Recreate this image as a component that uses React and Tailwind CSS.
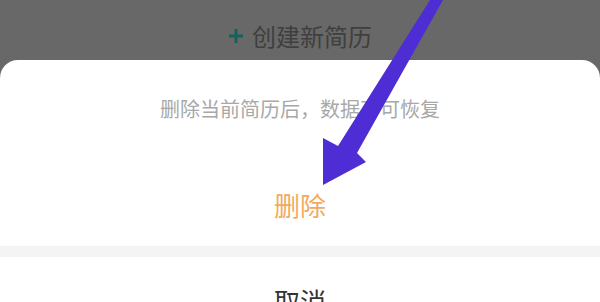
import React from 'react';

const cjk = { fontFamily: '"Noto Sans CJK SC", "Noto Sans", sans-serif' };

function Arrow() {
  // annotation arrow drawn over the screenshot
  return (
    <svg
      className="absolute inset-0 pointer-events-none"
      width="600"
      height="302"
      viewBox="0 0 600 302"
    >
      <polygon
        points="430,0 443,0 357,153 366,162 323,185 323,138 338,146"
        fill="#4e2dd4"
      />
    </svg>
  );
}

function App() {
  return (
    <div className="relative w-[600px] h-[302px] overflow-hidden bg-[#686868]" style={cjk}>
      {/* dimmed page behind the sheet */}
      <div className="h-[60px] flex items-center justify-center gap-[8px] pt-[12px]">
        <svg width="16" height="16" viewBox="0 0 16 16">
          <path d="M8 1v14M1 8h14" stroke="#15625c" strokeWidth="3" />
        </svg>
        <span className="text-[24px] leading-none text-[#3f3f3f]">创建新简历</span>
      </div>

      {/* action sheet */}
      <div className="bg-white rounded-t-[18px]">
        <div className="h-[98px] flex items-center justify-center">
          <p className="text-[20px] leading-none text-[#a8a8a8]">删除当前简历后，数据不可恢复</p>
        </div>
        <div className="h-[88px] flex items-center justify-center pt-[6px]">
          <button className="text-[26px] leading-none text-[#f3a95e]">删除</button>
        </div>
        <div className="h-[11px] bg-[#f4f4f4]" />
        <div className="flex justify-center pt-[28px] h-[60px]">
          <button className="text-[26px] leading-none text-[#333333]">取消</button>
        </div>
      </div>

      <Arrow />
    </div>
  );
}

export default App;
